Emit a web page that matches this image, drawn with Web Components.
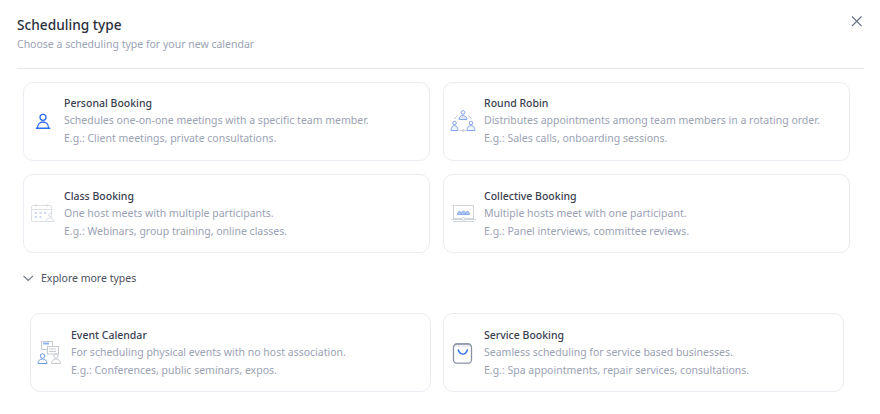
<!DOCTYPE html>
<html>
<head>
<meta charset="utf-8">
<title>Scheduling type</title>
<style>
  html, body { margin: 0; padding: 0; background: #fff; }
  body { font-family: "Noto Sans", Inter, sans-serif; width: 880px; height: 414px; overflow: hidden; }
</style>
</head>
<body>
<scheduling-dialog>
  <dialog-header slot="header" heading="Scheduling type" sub="Choose a scheduling type for your new calendar"></dialog-header>
  <card-grid slot="main">
    <type-card heading="Personal Booking" line="Schedules one-on-one meetings with a specific team member." eg="E.g.: Client meetings, private consultations.">
      <svg slot="icon" width="40" height="40" viewBox="0 0 40 40" fill="none" stroke="#2b6cf6" stroke-width="1.300"><circle cx="19" cy="16.300" r="3"/><path d="M13.500 27c0-3.500 2.200-6 5.500-6s5.500 2.500 5.500 6" stroke-linejoin="round"/><path d="M12.300 27.300h13.400" stroke-linecap="round" stroke-width="1.500"/></svg>
    </type-card>
    <type-card heading="Round Robin" line="Distributes appointments among team members in a rotating order." eg="E.g.: Sales calls, onboarding sessions.">
      <svg slot="icon" width="40" height="40" viewBox="0 0 40 40" fill="none" stroke="#86a8f0" stroke-width="1"><circle cx="19" cy="11.500" r="1.800"/><path d="M15 18.500c0-2.400 1.800-4 4-4s4 1.600 4 4z" fill="#dfe8fb"/><circle cx="10.500" cy="22" r="1.800"/><path d="M7 29.500c0-3 1.500-5 3.500-5s3.500 2 3.500 5z" fill="#eef3fd"/><circle cx="27" cy="22" r="1.800"/><path d="M23 29.500c0-3 1.800-5 4-5s4 2 4 5z" fill="#eef3fd"/><path d="M10.500 18c.8-1.600 2-2.800 3.500-3.600M27.500 18c-.8-1.600-2-2.800-3.500-3.600M15.500 29.500h7M19 28v3" stroke="#c8ccd5"/></svg>
    </type-card>
    <type-card heading="Class Booking" line="One host meets with multiple participants." eg="E.g.: Webinars, group training, online classes.">
      <svg slot="icon" width="40" height="40" viewBox="0 0 40 40" fill="none" stroke="#dcdfe5" stroke-width="1"><rect x="7.500" y="11.500" width="20" height="16" rx="1.500"/><path d="M7.500 15.500h20M12 10v3M23 10v3"/><path d="M11 19h2M15.500 19h2M20 19h2M11 23h2M15.500 23h2" stroke="#bccbe9" stroke-width="1.500"/><circle cx="26" cy="21" r="1.500" fill="#fff"/><path d="M22 27.500c0-2 1.800-3.500 4-3.500s4 1.500 4 3.500z" fill="#fff"/></svg>
    </type-card>
    <type-card heading="Collective Booking" line="Multiple hosts meet with one participant." eg="E.g.: Panel interviews, committee reviews.">
      <svg slot="icon" width="40" height="40" viewBox="0 0 40 40" fill="none" stroke="#d0d4db" stroke-width="1"><rect x="9.500" y="11.500" width="20" height="13"/><path d="M7 25.500h25M9 27.500h21"/><path d="M13.500 20.500c0-2 1-3 2-3s2 1 2 3zM17.500 20.500c0-2.500 1-3.500 2-3.500s2 1 2 3.500zM21.500 20.500c0-2 1-3 2-3s2 1 2 3z" fill="#a9c2f2" stroke="#8badec"/><circle cx="19.500" cy="25" r="1.500" fill="#fff"/></svg>
    </type-card>
  </card-grid>
  <more-toggle slot="toggle" label="Explore more types"></more-toggle>
  <card-grid slot="more" narrow>
    <type-card heading="Event Calendar" line="For scheduling physical events with no host association." eg="E.g.: Conferences, public seminars, expos.">
      <svg slot="icon" width="40" height="40" viewBox="0 0 40 40" fill="none" stroke="#c6cad3" stroke-width="1"><rect x="10.500" y="8.500" width="11" height="8"/><path d="M12 10.500h6" stroke="#8fb0f2" stroke-width="2"/><rect x="16.500" y="13.500" width="11" height="7.500" fill="#fff"/><path d="M18 16h7M18 18.500h7"/><circle cx="11.500" cy="23" r="2.200" stroke="#6f9bef"/><path d="M7 30.500c0-2.800 2-4.500 4.500-4.500s4.500 1.700 4.500 4.500z" stroke="#6f9bef"/><circle cx="25" cy="23" r="2.200"/><path d="M20.500 30.500c0-2.800 2-4.500 4.500-4.500s4.500 1.700 4.500 4.500z"/></svg>
    </type-card>
    <type-card heading="Service Booking" line="Seamless scheduling for service based businesses." eg="E.g.: Spa appointments, repair services, consultations.">
      <svg slot="icon" width="40" height="40" viewBox="0 0 40 40" fill="none"><path d="M9.500 14l2-3.300h14l2 3.300" fill="#eef0f3" stroke="#a3aab8"/><rect x="9.500" y="11" width="18" height="19.200" rx="3.500" stroke="#8a93a5" stroke-width="1.300"/><path d="M14.300 17c.9 2.900 2.600 4.100 4.500 4.100s3.600-1.200 4.500-4.100" stroke="#2b6cf6" stroke-width="1.400" stroke-linecap="round"/></svg>
    </type-card>
  </card-grid>
</scheduling-dialog>

<script>
class SchedulingDialog extends HTMLElement {
  constructor() {
    super();
    this.attachShadow({mode: 'open'}).innerHTML = `
      <style>
        :host { display: block; width: 880px; height: 414px; box-sizing: border-box; padding: 15px 16px 0 17px; color: #2c3240; }
        .rule { height: 1px; background: #e7e9ef; margin: 16px 0 12.600px; }
        .main { padding-left: 6px; }
        .more { padding: 0 5px 0 13px; }
      </style>
      <slot name="header"></slot>
      <div class="rule"></div>
      <div class="main"><slot name="main"></slot></div>
      <slot name="toggle"></slot>
      <div class="more"><slot name="more"></slot></div>
    `;
  }
}
customElements.define('scheduling-dialog', SchedulingDialog);

class DialogHeader extends HTMLElement {
  constructor() {
    super();
    this.attachShadow({mode: 'open'});
  }
  connectedCallback() {
    this.shadowRoot.innerHTML = `
      <style>
        :host { display: flex; justify-content: space-between; align-items: flex-start; }
        h1 { margin: 0; font-size: 13.700px; line-height: 20px; font-weight: 500; color: #2b303c; }
        p { margin: 1px 0 0; font-size: 10.500px; line-height: 16px; color: #9ba2b4; }
        svg { margin: 1px 0 0 0; display: block; }
      </style>
      <div>
        <h1>${this.getAttribute('heading')}</h1>
        <p>${this.getAttribute('sub')}</p>
      </div>
      <svg width="14" height="14" viewBox="0 0 14 14" fill="none" stroke="#667189" stroke-width="1.100"><path d="M2 .5l9.500 9.500M11.500 .5L2 10"/></svg>
    `;
  }
}
customElements.define('dialog-header', DialogHeader);

class CardGrid extends HTMLElement {
  constructor() {
    super();
    this.attachShadow({mode: 'open'}).innerHTML = `
      <style>
        :host { display: grid; grid-template-columns: 407px 407px; column-gap: 13px; row-gap: 13.800px; }
        :host([narrow]) { grid-template-columns: 401px 401px; column-gap: 12px; }
      </style>
      <slot></slot>
    `;
  }
}
customElements.define('card-grid', CardGrid);

class TypeCard extends HTMLElement {
  constructor() {
    super();
    this.attachShadow({mode: 'open'});
  }
  connectedCallback() {
    this.shadowRoot.innerHTML = `
      <style>
        :host { display: flex; align-items: center; box-sizing: border-box; height: 79px; border: 1px solid #eaecf1; border-radius: 10px; background: #fff; }
        .icon { width: 40px; flex: none; display: flex; justify-content: center; }
        h2 { margin: 0; font-size: 10.500px; line-height: 16px; font-weight: 500; color: #3a4050; }
        p { margin: 0; font-size: 10.500px; line-height: 18px; color: #9ba2b4; }
      </style>
      <div class="icon"><slot name="icon"></slot></div>
      <div class="text">
        <h2>${this.getAttribute('heading')}</h2>
        <p>${this.getAttribute('line')}</p>
        <p>${this.getAttribute('eg')}</p>
      </div>
    `;
  }
}
customElements.define('type-card', TypeCard);

class MoreToggle extends HTMLElement {
  constructor() {
    super();
    this.attachShadow({mode: 'open'});
  }
  connectedCallback() {
    this.shadowRoot.innerHTML = `
      <style>
        :host { display: flex; align-items: center; gap: 6px; height: 16px; margin: 16.600px 0 27.200px 6px; font-size: 10.500px; color: #4a5060; }
        svg { display: block; }
      </style>
      <svg width="12" height="12" viewBox="0 0 12 12" fill="none" stroke="#6b7488" stroke-width="1.100"><path d="M.5 3.800L5.200 8.500 10 3.800"/></svg>
      <span>${this.getAttribute('label')}</span>
    `;
  }
}
customElements.define('more-toggle', MoreToggle);
</script>
</body>
</html>
